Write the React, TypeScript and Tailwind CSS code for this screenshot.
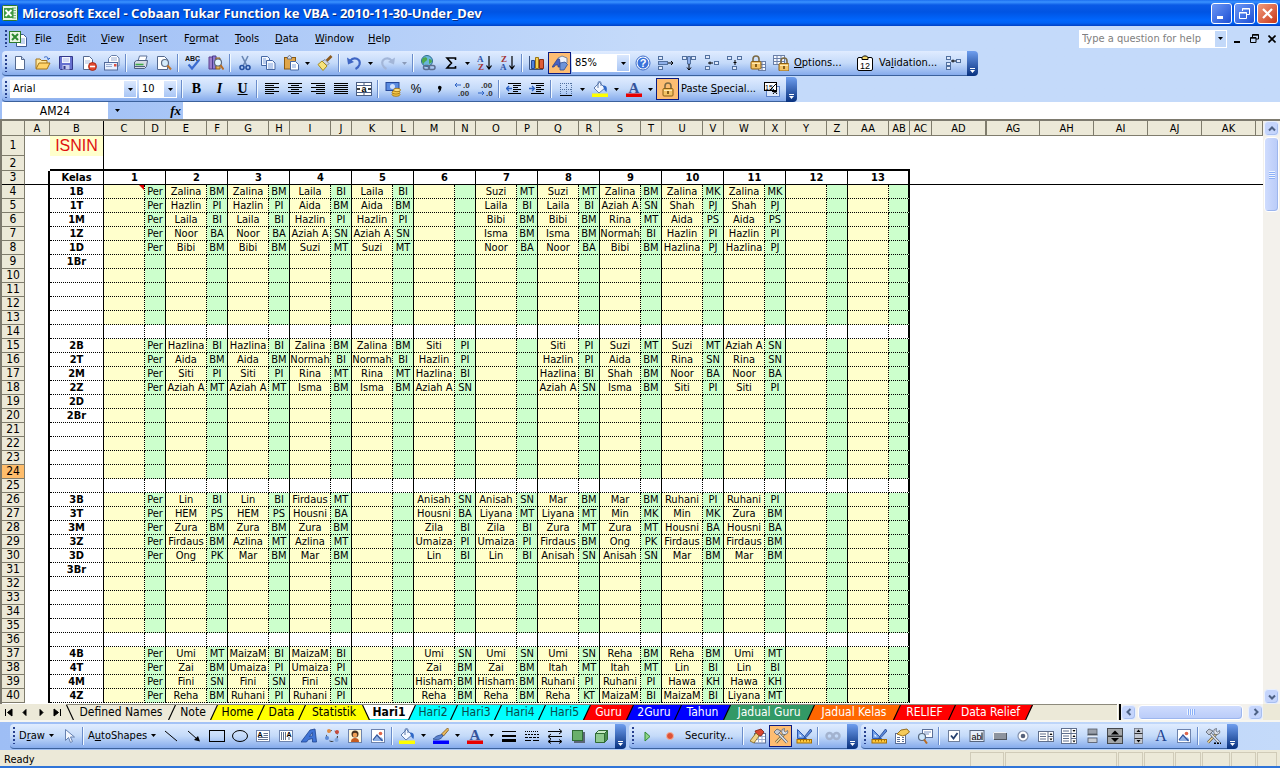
import type { ReactNode } from 'react';

const PAGE = '#f4f8ff';
const INK = '#26406e';

function Lock() {
  return (
    <g>
      <path d="M5 8V5a3 3 0 0 1 6 0v3" fill="none" stroke="#7b6a45" strokeWidth="1.6" />
      <rect x="3" y="7.5" width="10" height="7.5" rx="1" fill="#f3c365" stroke="#8a5f16" />
      <path d="M4 9.5h8" stroke="#ffe9b0" />
      <path d="M8 10v3" stroke="#6b4508" strokeWidth="1.6" />
    </g>
  );
}

function Box({ x, y }: { x: number; y: number }) {
  return <rect x={x + 0.5} y={y + 0.5} width="4" height="3" fill="#dfe9fb" stroke="#51709f" />;
}

function Underbar({ color }: { color: string }) {
  return <rect x="0" y="12.5" width="16" height="3.5" fill={color} />;
}

function Lines({ rows }: { rows: [number, number][] }) {
  return (
    <g stroke="#000" strokeWidth="1">
      {rows.map(([x1, x2], i) => (
        <path key={i} d={`M${x1} ${2.5 + i * 2}H${x2}`} />
      ))}
    </g>
  );
}

const ruler = (
  <g>
    <path d="M1.5 1.5v9h9z" fill="#6f9ee8" stroke="#2c59b3" />
    <path d="M3.5 6v2.5H6z" fill="#fff" />
    <path d="M14.5 1L9 8l-1.5 3L10 9.5 16 3z" fill="#5b8ade" stroke="#23448c" strokeWidth=".8" />
    <rect x="1" y="11.5" width="14.5" height="3.5" fill="#ffc83d" stroke="#a66f00" />
    <path d="M4.5 12v1.5M7.5 12v1.5M10.5 12v1.5M13.5 12v1.5" stroke="#a66f00" />
  </g>
);

const tools = (
  <g>
    <path d="M3 14.5L12 5" stroke="#6d5a36" strokeWidth="2.6" />
    <path d="M3 14.5L12 5" stroke="#f2dfa6" strokeWidth="1.2" />
    <path d="M14.5 2.5a3 3 0 1 1-3-2l-.5 2.5 1.5 1z" fill="#dfe4ee" stroke="#58616f" strokeWidth=".8" />
    <path d="M5 5l9 9.5" stroke="#58616f" strokeWidth="2.6" />
    <path d="M5 5l9 9.5" stroke="#e8edf5" strokeWidth="1.2" />
    <path d="M1 4l3-3 4 2-4 4z" fill="#c3cad6" stroke="#58616f" strokeWidth=".8" />
  </g>
);

const picture = (
  <g>
    <rect x="1.5" y="1.5" width="13" height="13" fill="#fff" stroke="#6d83ad" />
    <path d="M3 13v-2l4-4 3 3 1-1 2 2v2z" fill="#8fb0e3" />
    <path d="M3 12l4-5 5.5 6" fill="none" stroke="#33559b" strokeWidth="1.2" />
    <circle cx="10.5" cy="5.5" r="1.8" fill="#e0664a" />
  </g>
);

const bucket = (
  <g>
    <path d="M7.5 1.5L13 7l-6 5-5-5z" fill="#f2f7ff" stroke="#5d7aad" />
    <path d="M6 7V2a1.5 1.5 0 0 1 3 0v3" fill="none" stroke="#5d7aad" />
    <path d="M11 4.5c3.5 0 4.5 2 3.5 6.5-1.5-1-2-2-2.5-3z" fill="#2f68c8" />
  </g>
);

const icons: Record<string, ReactNode> = {
  new: (
    <g>
      <path d="M3.5 1.5h6l3 3v10h-9z" fill="#fff" stroke="#54698f" />
      <path d="M9.5 1.5v3h3" fill="#c8d9f5" stroke="#54698f" />
    </g>
  ),
  open: (
    <g>
      <path d="M1 13.5V4h4l1.5 1.5H12V8" fill="#ffe79c" stroke="#a4741a" />
      <path d="M1 14l3-6h11l-3 6z" fill="#ffd368" stroke="#a4741a" />
      <path d="M9 2.5c2-1.5 4-.5 4.5 1.5M15 3l-1.5 1.5L12 3.5" fill="none" stroke="#2c5fc0" />
    </g>
  ),
  save: (
    <g>
      <path d="M1.5 1.5h13v13h-12l-1-1z" fill="#6670cf" stroke="#33388a" />
      <rect x="4" y="2" width="8" height="6" fill="#f2f5ff" />
      <path d="M5 4h6M5 6h6" stroke="#b3bce6" />
      <rect x="4.5" y="10" width="7" height="4.5" fill="#c6cbef" />
      <rect x="5.5" y="11" width="2" height="3" fill="#33388a" />
    </g>
  ),
  permission: (
    <g>
      <path d="M2.5 1.5h6l3 3v10h-9z" fill="#fff" stroke="#54698f" />
      <path d="M4 6h5M4 8h5" stroke="#a9badb" />
      <circle cx="11.5" cy="11.5" r="4" fill="#e2492f" stroke="#9e1f0c" strokeWidth=".8" />
      <path d="M9 11.5h5" stroke="#fff" strokeWidth="1.6" />
    </g>
  ),
  mail: (
    <g>
      <path d="M4.5 7V3.5l3-3h5L15 3v8H6.5z" fill="#fff" stroke="#6880aa" />
      <rect x=".5" y="7.5" width="13" height="7.5" fill="#e9f1ff" stroke="#51699a" />
      <path d="M2 9.5h6M2 11.5h6" stroke="#9aadd2" />
      <rect x="10" y="9" width="2.5" height="2.5" fill="#de5040" />
      <path d="M7 3h6M7 5h6" stroke="#9aadd2" />
    </g>
  ),
  print: (
    <g>
      <path d="M5 6l1.5-5H14l-1.5 5z" fill="#fff" stroke="#5d7197" />
      <path d="M1.5 7l2-1.5h11l-1 6-2 2h-10z" fill="#d6dbe5" stroke="#4d5f80" />
      <path d="M2 11.5h10" stroke="#4d5f80" />
      <path d="M2.5 9.5h8" stroke="#3faa46" strokeWidth="1.6" />
    </g>
  ),
  preview: (
    <g>
      <path d="M1.5 1.5h7l3 3v10h-10z" fill="#fff" stroke="#54698f" />
      <circle cx="9" cy="8" r="3.5" fill="#d5ecfb" stroke="#5c6c86" strokeWidth="1.2" />
      <path d="M11.5 10.5l3.5 4" stroke="#c1762b" strokeWidth="2" />
    </g>
  ),
  spelling: (
    <g>
      <text x="0" y="6" fontSize="7" fontWeight="bold" fontFamily="Liberation Sans, sans-serif" fill="#111">
        ABC
      </text>
      <path d="M3.5 9.5l3.5 4 7-8.5" fill="none" stroke="#3a6bd0" strokeWidth="2.2" />
    </g>
  ),
  research: (
    <g>
      <path d="M1 2h3.5v12H1z" fill="#9d7fca" stroke="#5a3e8c" />
      <path d="M4.5 1H8v13H4.5z" fill="#8d7bd0" stroke="#4a3a8c" />
      <path d="M8 3h4v11H8z" fill="#e7b25a" stroke="#946217" />
      <circle cx="10" cy="7.5" r="3.5" fill="#e6f6ff" stroke="#58687f" strokeWidth="1.2" />
      <path d="M12.5 10l3 4.5" stroke="#b96c22" strokeWidth="2" />
    </g>
  ),
  cut: (
    <g fill="none">
      <path d="M5 1l4.5 9M11 1L6.5 10" stroke="#6a87b4" strokeWidth="1.6" />
      <circle cx="5" cy="12.5" r="2" stroke="#24509f" strokeWidth="1.6" />
      <circle cx="11" cy="12.5" r="2" stroke="#24509f" strokeWidth="1.6" />
    </g>
  ),
  copy: (
    <g fill={PAGE} stroke="#4668a5">
      <path d="M1.5 1.5h6l2 2v7h-8z" />
      <path d="M3 4h3M3 6h3M3 8h3" stroke="#7fa0dc" />
      <path d="M6.5 5.5h6L15 8v6.5H6.5z" />
      <path d="M8 9h5M8 11h5M8 13h5" stroke="#7fa0dc" />
    </g>
  ),
  paste: (
    <g>
      <rect x="1.5" y="2.5" width="11" height="11.5" fill="#e0a64a" stroke="#8a5a13" />
      <path d="M4.5 4V2l2-1.5L8.5 2v2z" fill="#dce0e8" stroke="#67728a" />
      <path d="M7.5 6.5h5l3 3V15h-8z" fill="#fff" stroke="#4668a5" />
      <path d="M9 10h4M9 12h4" stroke="#7fa0dc" />
    </g>
  ),
  painter: (
    <g>
      <path d="M14.5 1L9.5 6" stroke="#8c5a1d" strokeWidth="2.6" />
      <path d="M8 4.5l4 4-2 2-5-4z" fill="#cfd5e2" stroke="#6c7487" strokeWidth=".8" />
      <path d="M5 6L10 11l-4 4.5L1 9.5z" fill="#f6e27b" stroke="#a58a1f" />
    </g>
  ),
  undo: (
    <g>
      <path d="M4 6c4-5 11-2 9.5 3.5-.6 2-2 3.5-4 4.5" fill="none" stroke="#3f66c4" strokeWidth="2.2" />
      <path d="M1 2.5l1 7 6-2.5z" fill="#3f66c4" />
    </g>
  ),
  redo: (
    <g>
      <path d="M12 6C8 1 1 4 2.5 9.5c.6 2 2 3.5 4 4.5" fill="none" stroke="#a3b6d8" strokeWidth="2.2" />
      <path d="M15 2.5l-1 7-6-2.5z" fill="#a3b6d8" />
    </g>
  ),
  hyperlink: (
    <g>
      <circle cx="7" cy="6" r="5.5" fill="#69b6d9" stroke="#2c6c92" />
      <path d="M3 3c3-2 5 0 4 2s-3 1-3 4C2 8 1 5 3 3zM9 4c2 0 3 1 3 3l-3 2z" fill="#4da84d" />
      <rect x="3.5" y="10.5" width="6" height="4" rx="2" fill="none" stroke="#5b6e91" strokeWidth="1.5" />
      <rect x="8.5" y="10.5" width="6.5" height="4" rx="2" fill="none" stroke="#5b6e91" strokeWidth="1.5" />
    </g>
  ),
  sum: <path d="M12.5 5V3H4l4.5 5L4 13h8.5v-2" fill="none" stroke="#000" strokeWidth="1.6" />,
  sortAsc: (
    <g fontFamily="Liberation Serif, serif" fontSize="9" fontWeight="bold">
      <text x="0" y="7" fill="#2d53a5">A</text>
      <text x="1" y="15" fill="#a33030">Z</text>
      <path d="M12 1v12M9.5 10.5L12 14l2.5-3.5" fill="none" stroke="#000" strokeWidth="1.2" />
    </g>
  ),
  sortDesc: (
    <g fontFamily="Liberation Serif, serif" fontSize="9" fontWeight="bold">
      <text x="1" y="7" fill="#a33030">Z</text>
      <text x="0" y="15" fill="#2d53a5">A</text>
      <path d="M12 1v12M9.5 10.5L12 14l2.5-3.5" fill="none" stroke="#000" strokeWidth="1.2" />
    </g>
  ),
  chart: (
    <g>
      <path d="M.5 1v13.5H14" fill="none" stroke="#39527f" />
      <path d="M2.5 5.5h3v8h-3z" fill="#4f82dc" stroke="#254a93" />
      <path d="M6.5 2.5h3v11h-3z" fill="#f5cf54" stroke="#9d7412" />
      <path d="M10.5 4.5h4v9h-4z" fill="#dd5d38" stroke="#8c2b10" />
    </g>
  ),
  drawing: (
    <g>
      <path d="M6 3l4-2 5 2v5l-4 2-5-2z" fill="#eef2fa" stroke="#7c8699" />
      <path d="M0 12L5.5 4h2l1 8H6v-2H3.5L2 12z" fill="#4a62c0" stroke="#283a85" strokeWidth=".7" />
      <path d="M8 8l5-1 2.5 2.5L12 15H8z" fill="#6e94d8" stroke="#2f4f94" strokeWidth=".8" />
    </g>
  ),
  help: (
    <g>
      <circle cx="8" cy="8" r="7" fill="#fff" stroke="#3d6cc8" />
      <circle cx="8" cy="8" r="5.5" fill="#3b73db" />
      <text x="8" y="12" textAnchor="middle" fontSize="11" fontWeight="bold" fontFamily="Liberation Sans, sans-serif" fill="#fff">
        ?
      </text>
    </g>
  ),
  tracePrecedents: (
    <g>
      <Box x={0} y={1} /><Box x={0} y={11} />
      <rect x=".5" y="6.5" width="9" height="3" fill="#8fb0ea" stroke="#51709f" />
      <path d="M10 8h5M13 6l2 2-2 2" fill="none" stroke="#000" />
    </g>
  ),
  traceDown: (
    <g>
      <Box x={1} y={1} /><Box x={10} y={1} />
      <path d="M6.5 1.5h3V9h-3z" fill="#8fb0ea" stroke="#51709f" />
      <path d="M8 9v6M6 12.5L8 15l2-2.5" fill="none" stroke="#000" />
    </g>
  ),
  traceDependents: (
    <g>
      <Box x={1} y={0} /><Box x={1} y={11} /><Box x={10} y={6} />
      <path d="M4 8h5M6 6.5v3" stroke="#000" />
    </g>
  ),
  traceUp: (
    <g>
      <Box x={0} y={1} /><Box x={10} y={1} /><Box x={5} y={11} />
      <path d="M8 5v5M6.5 7.5h3" stroke="#000" />
    </g>
  ),
  lockSheet: (
    <g>
      <rect x="8.5" y="6.5" width="7" height="9" fill={PAGE} stroke="#6a7fa8" />
      <path d="M9 9.5h6M9 12.5h6M12 7v8" stroke="#6a7fa8" />
      <g transform="translate(-2 -1)"><Lock /></g>
    </g>
  ),
  lockBook: (
    <g>
      <rect x=".5" y=".5" width="11" height="9" fill={PAGE} stroke="#6a7fa8" />
      <path d="M1 3.5h10M1 6.5h10M4 1v8M8 1v8" stroke="#6a7fa8" />
      <g transform="translate(3 1)"><Lock /></g>
    </g>
  ),
  lock: <Lock />,
  calendar: (
    <g>
      <rect x=".5" y="2.5" width="15" height="13" rx="1.5" fill="#fff" stroke="#000" />
      <path d="M5 4.5v-2L6.5 1h3L11 2.5v2z" fill="#f3d76b" stroke="#000" />
      <text x="8" y="14" textAnchor="middle" fontSize="9" fontFamily="Liberation Sans, sans-serif">
        12
      </text>
    </g>
  ),
  group: (
    <g>
      <Box x={1} y={1} /><Box x={1} y={7} /><Box x={1} y={11} /><Box x={11} y={4} />
      <path d="M6 6h5M8 4.5v3" stroke="#000" />
    </g>
  ),
  alignLeft: <Lines rows={[[1, 15], [1, 10], [1, 15], [1, 10], [1, 15], [1, 10]]} />,
  alignCenter: <Lines rows={[[1, 15], [4, 12], [1, 15], [4, 12], [1, 15], [4, 12]]} />,
  alignRight: <Lines rows={[[1, 15], [6, 15], [1, 15], [6, 15], [1, 15], [6, 15]]} />,
  justify: <Lines rows={[[1, 15], [1, 15], [1, 15], [1, 15], [1, 15], [1, 15]]} />,
  merge: (
    <g>
      <rect x=".5" y="1.5" width="15" height="13" fill="#fff" stroke="#4a5e83" />
      <path d="M1 4.5h15M1 11.5h15M8 2v2M8 12v2" stroke="#4a5e83" />
      <text x="8" y="10.5" textAnchor="middle" fontSize="9" fontWeight="bold" fontFamily="Liberation Sans, sans-serif">
        a
      </text>
      <path d="M1 8h3M12 8h3" stroke="#000" strokeWidth="1.4" />
    </g>
  ),
  currency: (
    <g>
      <rect x="1" y="1.5" width="13" height="8" fill="#5a8be0" stroke="#24489a" />
      <circle cx="7.5" cy="5.5" r="2.5" fill="#cfe0ff" />
      <ellipse cx="11" cy="13.5" rx="4" ry="1.8" fill="#f7ca4b" stroke="#9a6a05" strokeWidth=".8" />
      <ellipse cx="11" cy="11.3" rx="4" ry="1.8" fill="#f7ca4b" stroke="#9a6a05" strokeWidth=".8" />
      <ellipse cx="12" cy="9" rx="3.5" ry="1.7" fill="#ffe183" stroke="#9a6a05" strokeWidth=".8" />
    </g>
  ),
  percent: (
    <text x="8" y="12" textAnchor="middle" fontSize="12" fontFamily="Liberation Sans, sans-serif">
      %
    </text>
  ),
  comma: <path d="M7 6.5a1.8 1.8 0 1 1 3.200 1.200C10 10 8.500 11 7 11.500v-.6c1-.6 1.500-1.200 1.400-2.200C7.500 8.600 7 7.500 7 6.500z" />,
  moreDecimals: (
    <g fontFamily="Liberation Sans, sans-serif" fontSize="8" fontWeight="bold" fill="#333">
      <path d="M7 4H1M3 2L1 4l2 2" fill="none" stroke="#2d62c4" />
      <text x="9" y="7">.0</text>
      <text x="4" y="15">.00</text>
    </g>
  ),
  lessDecimals: (
    <g fontFamily="Liberation Sans, sans-serif" fontSize="8" fontWeight="bold" fill="#333">
      <text x="4" y="7">.00</text>
      <path d="M1 12h6M5 10l2 2-2 2" fill="none" stroke="#2d62c4" />
      <text x="9" y="15">.0</text>
    </g>
  ),
  outdent: (
    <g>
      <Lines rows={[[2, 15], [7, 15], [7, 12], [7, 15], [7, 12], [2, 15]]} />
      <path d="M6 7.5H.5M3 5L.5 7.5 3 10" fill="none" stroke="#2d62c4" strokeWidth="1.3" />
    </g>
  ),
  indent: (
    <g>
      <Lines rows={[[2, 15], [7, 15], [7, 12], [7, 15], [7, 12], [2, 15]]} />
      <path d="M0 7.5h5.5M3 5l2.5 2.5L3 10" fill="none" stroke="#2d62c4" strokeWidth="1.3" />
    </g>
  ),
  borders: (
    <g stroke="#51709f" strokeDasharray="1 1">
      <path d="M2 2.5h12M2 8.5h12M2.5 2v12M8.5 2v12M13.5 2v12" />
      <path d="M2 14.5h12" stroke="#000" strokeDasharray="none" />
    </g>
  ),
  fill: <g>{bucket}<Underbar color="#ffff00" /></g>,
  fontColor: (
    <g>
      <text x="8" y="12" textAnchor="middle" fontSize="15" fontWeight="bold" fontFamily="Liberation Serif, serif" fill="#35549b">
        A
      </text>
      <Underbar color="#e80000" />
    </g>
  ),
  lineColor: (
    <g>
      <path d="M14.5 0L16 1.5 10.5 8 8.5 6z" fill="#e9b85c" stroke="#7d5613" strokeWidth=".8" />
      <path d="M9 6.5L4 8c-1.5.5-2.5 2.5-4 3 4 1.5 8 .5 10-3z" fill="#5d84cf" stroke="#274a91" strokeWidth=".8" />
      <Underbar color="#0000ff" />
    </g>
  ),
  calc: (
    <g>
      <rect x="2.5" y="5.5" width="13" height="10" fill="#dbe7fb" stroke="#5b81c9" />
      <rect x=".5" y="1.5" width="12" height="8" fill="#fff" stroke="#000" />
      <text x="5" y="8.5" textAnchor="middle" fontSize="7" fontFamily="Liberation Sans, sans-serif">
        15
      </text>
      <path d="M13 2L5 10M8 10.5h5M9 13l4-5M9 8l4 5" stroke="#000" fill="none" />
    </g>
  ),
  pointer: <path d="M4.5 1.5v11l3-3 2 5 2-1-2-4.5h4z" fill="#f2f6fd" stroke="#6681b0" />,
  line: <path d="M2 3l12 10" stroke="#000" />,
  arrow: <g><path d="M2 3l9 8" stroke="#000" /><path d="M14 13.5L8 12l4-4z" /></g>,
  rectangle: <rect x=".5" y="2.5" width="15" height="11" fill="none" stroke="#000" />,
  oval: <ellipse cx="8" cy="8" rx="7.5" ry="5.5" fill="none" stroke="#000" />,
  textBox: (
    <g>
      <rect x="1.5" y="2.5" width="13" height="11" fill="#fff" stroke="#6d83ad" />
      <text x="2.5" y="8.5" fontSize="7" fontWeight="bold" fontFamily="Liberation Sans, sans-serif">A</text>
      <path d="M8.5 5.5H13M8.5 7.5H13M3 9.5h10M3 11.5h10" stroke="#5f6f8d" />
    </g>
  ),
  verticalText: (
    <g>
      <rect x="1.5" y="2.5" width="13" height="11" fill="#fff" stroke="#6d83ad" />
      <path d="M3.5 4v8M5.5 4v8M7.5 4v8M11 9v3" stroke="#5f6f8d" />
      <text x="8.5" y="8.5" fontSize="7" fontWeight="bold" fontFamily="Liberation Sans, sans-serif">A</text>
    </g>
  ),
  wordArt: <path d="M0 14L9 2l5-1 1.5 13h-4v-3.5l-4 1-2 2.5zM8.5 8.5l3-.8-.2-3.2z" fill="#3f74d6" stroke="#1d438f" strokeWidth=".8" />,
  diagram: (
    <g>
      <circle cx="8" cy="8" r="5.5" fill="none" stroke="#333" strokeDasharray="4 3" />
      <circle cx="5" cy="3" r="2" fill="#e08b42" />
      <circle cx="13" cy="4" r="2" fill="#c64b3b" />
      <circle cx="3" cy="10" r="2" fill="#5b8ad6" />
      <circle cx="12.5" cy="12" r="2" fill="#7ea6e2" />
    </g>
  ),
  clipArt: (
    <g>
      <rect x="1.5" y="1.5" width="13" height="13" fill="#fff6d8" stroke="#6d83ad" />
      <circle cx="8" cy="6" r="3.5" fill="#47321f" />
      <circle cx="8" cy="7" r="2.3" fill="#f1a055" />
      <path d="M4 14c0-3 1.5-4 4-4s4 1 4 4z" fill="#c45a20" />
    </g>
  ),
  picture,
  lineStyle: (
    <g>
      <rect x="1" y="3" width="14" height="1" />
      <rect x="1" y="7" width="14" height="2" />
      <rect x="1" y="11" width="14" height="3" />
    </g>
  ),
  dashStyle: (
    <g stroke="#000">
      <path d="M1 3.5h14" strokeDasharray="1 1" /><path d="M1 6.5h14" strokeDasharray="2 1" />
      <path d="M1 9.5h14" strokeDasharray="3 1" /><path d="M1 12.5h14" strokeDasharray="6 2" />
    </g>
  ),
  arrowStyle: (
    <g stroke="#000" fill="none">
      <path d="M1 3.5h13M12 1l3 2.5L12 6M2 8.5h13M4 6L1 8.5 4 11M2 13.5h12M4 11.5l-3 2 3 2M12 11.5l3 2-3 2" />
    </g>
  ),
  shadow: (
    <g>
      <rect x="4" y="4" width="11" height="11" fill="#5a6577" />
      <rect x="2.5" y="2.5" width="10" height="10" fill="#69b06b" stroke="#2f6b35" />
    </g>
  ),
  threeD: (
    <g stroke="#2f6b35">
      <path d="M2.5 5.5h9v9h-9z" fill="#8fca8f" />
      <path d="M2.5 5.5l3-3h9l-3 3z" fill="#c9ecc6" />
      <path d="M11.5 5.5l3-3v9l-3 3z" fill="#4b8f52" />
    </g>
  ),
  play: <path d="M6 4l5 4.5L6 13z" fill="#8ed487" stroke="#2f8a34" />,
  record: <circle cx="8" cy="8" r="3.5" fill="#dd5237" stroke="#f4b3a0" />,
  visualBasic: (
    <g>
      <rect x="4.5" y="5.5" width="11" height="9.5" fill="#fff" stroke="#5b6f98" />
      <path d="M5 8.5h10M5 11.5h10M8.5 6v9M12 6v9" stroke="#9fb0d3" />
      <path d="M5 3l6-2 3 3-3 4-4-1z" fill="#d9452f" stroke="#7e1a0c" strokeWidth=".8" />
      <path d="M0 13l6-8 3 3-5 7z" fill="#efd48b" stroke="#80621a" strokeWidth=".8" />
    </g>
  ),
  tools,
  ruler,
  infinity: (
    <g fill="none" stroke="#a3b3cf" strokeWidth="2.4">
      <circle cx="4.5" cy="8" r="3" /><circle cx="11.5" cy="8" r="3" />
    </g>
  ),
  properties: (
    <g>
      <rect x="1.5" y="5.5" width="10" height="10" fill="#fff" stroke="#5b6f98" />
      <path d="M3 9.5h3M3 11.5h3M3 13.5h3M8 9.5h2M8 11.5h2M8 13.5h2" stroke="#5b6f98" />
      <path d="M3 6l4-4 6-1 2.5 3-4 3-3 1z" fill="#f4ca5a" stroke="#8f6310" strokeWidth=".9" />
    </g>
  ),
  viewCode: (
    <g>
      <rect x="5.5" y="1.5" width="10" height="8" fill="#fff" stroke="#5b6f98" />
      <path d="M7 4h7M7 6h5" stroke="#7b93c4" />
      <circle cx="5" cy="9" r="3.5" fill="#cfe6fb" stroke="#57687f" strokeWidth="1.2" />
      <path d="M7 11.5l3 4" stroke="#b96c22" strokeWidth="2" />
    </g>
  ),
  checkBox: (
    <g>
      <rect x="2.5" y="2.5" width="11" height="11" fill="#fff" stroke="#6f7f9b" />
      <path d="M5 7.5l2.5 3 4-5.5" fill="none" stroke={INK} strokeWidth="1.8" />
    </g>
  ),
  editBox: (
    <g>
      <rect x="1" y="2.5" width="14" height="11" fill="#e7eefa" stroke="#55647e" />
      <text x="2.5" y="11.5" fontSize="9" fontFamily="Liberation Sans, sans-serif">ab</text>
      <path d="M13 4.5V12" stroke="#000" />
    </g>
  ),
  command: (
    <g>
      <rect x="2" y="5" width="13" height="7" fill="#4f555f" />
      <rect x="1" y="4" width="13" height="7" fill="#8d939e" />
      <path d="M1.5 11V4.5H14" fill="none" stroke="#eef1f6" />
    </g>
  ),
  option: (
    <g>
      <circle cx="8" cy="8" r="5" fill="#fff" stroke="#8391ad" strokeWidth="1.2" />
      <circle cx="8" cy="8" r="2.3" fill="#56617a" />
    </g>
  ),
  listBox: (
    <g>
      <rect x=".5" y="3.5" width="15" height="10" fill="#fff" stroke="#5f6f8d" />
      <path d="M2 6h6M2 8.5h6M2 11h6M10 3.5v10M10 8.5h5" stroke="#5f6f8d" />
      <path d="M11.5 7L13 5l1.5 2zM11.5 10.5l1.5 2 1.5-2z" />
    </g>
  ),
  comboBox: (
    <g>
      <rect x=".5" y=".5" width="15" height="15" fill="#fff" stroke="#5f6f8d" />
      <path d="M1 5.5h15M2 3h6M2 8h6M2 10.5h6M2 13h6M10 .5v15M10 10.5h5" stroke="#5f6f8d" />
      <path d="M11.5 2L13 4l1.5-2zM11.5 9L13 7l1.5 2zM11.5 12.5l1.5 2 1.5-2z" />
    </g>
  ),
  toggle: (
    <g>
      <rect x="4" y="1" width="9" height="5" fill="#9aa0ab" stroke="#555c68" strokeWidth=".8" />
      <path d="M3.5 7h10" stroke="#000" />
      <path d="M3.5 8h10" stroke="#fff" />
      <rect x="4" y="10" width="9" height="4.5" fill="#c9cdd5" stroke="#4c5361" strokeWidth=".8" />
    </g>
  ),
  spin: (
    <g>
      <rect x=".5" y=".5" width="15" height="15" fill="#a3a6a8" stroke="#44484e" />
      <path d="M4 6.5l4-4 4 4zM4 10l4 4 4-4z" />
      <path d="M1 8.2h14" stroke="#000" />
    </g>
  ),
  scroll: (
    <g>
      <rect x="4.5" y=".5" width="8" height="15" fill="#c3c8d1" stroke="#6b7382" strokeWidth=".8" />
      <path d="M4.5 5.5h8M4.5 10.5h8" stroke="#333" />
      <path d="M6.5 4l2-2.5 2 2.5zM6.5 12l2 2.5 2-2.5z" />
    </g>
  ),
  label: (
    <text x="8" y="13" textAnchor="middle" fontSize="16" fontFamily="Liberation Serif, serif" fill="#1d418f">
      A
    </text>
  ),
  moreControls: <g>{tools}<path d="M9 15.5h7" stroke="#000" strokeWidth="2" strokeDasharray="2 1" /></g>,
};

function Icon({ name }: { name: string }) {
  return (
    <svg viewBox="0 0 16 16" className="w-4 h-4 shrink-0" aria-hidden="true">
      {icons[name]}
    </svg>
  );
}

function Tool({ name, active }: { name: string; active?: boolean }) {
  return (
    <button
      aria-label={name}
      className={`w-[23px] h-[22px] shrink-0 flex items-center justify-center ${active ? 'bg-[#fdbd72] border border-[#0a1a80]' : ''}`}
    >
      <Icon name={name} />
    </button>
  );
}

function Glyph({ label, className }: { label: string; className: string }) {
  return (
    <button className={`w-[23px] shrink-0 text-center text-[14px] leading-[22px] font-bold font-['Liberation_Serif',serif] ${className}`}>
      {label}
    </button>
  );
}

function Caret({ dim }: { dim?: boolean }) {
  return (
    <svg viewBox="0 0 5 3" className={`w-[5px] h-[3px] shrink-0 ${dim ? 'fill-[#8a9ab8]' : 'fill-black'}`} aria-hidden="true">
      <path d="M0 0h5L2.5 3z" />
    </svg>
  );
}

function DropArrow({ dim }: { dim?: boolean }) {
  return (
    <button aria-label="More choices" className="w-[11px] h-[22px] shrink-0 flex items-center justify-center">
      <Caret dim={dim} />
    </button>
  );
}

function Sep() {
  return (
    <div className="w-1.5 h-[18px] shrink-0 flex justify-center">
      <div className="w-px bg-[#6a8ccb]" />
      <div className="w-px bg-[#f1f9ff]" />
    </div>
  );
}

function Grip() {
  return <div className="w-[2px] h-[17px] ml-[3px] mr-px shrink-0 bg-[repeating-linear-gradient(#27418f_0_2px,transparent_2px_4px)]" />;
}

function Toolbar({ label, children }: { label: string; children: ReactNode }) {
  return (
    <div role="toolbar" aria-label={label} className="h-[25px] flex shrink-0">
      <div className="flex items-center pr-[3px] rounded-l-sm border-b border-[#3b619c] bg-linear-to-b from-[#e0ecff] via-[#c4daf9] to-[#86abec]">
        <Grip />
        {children}
      </div>
      <button
        aria-label="Toolbar options"
        className="w-[11px] shrink-0 rounded-r-sm bg-linear-to-b from-[#6f9eee] to-[#07317f] flex flex-col items-center justify-end gap-px pb-[3px]"
      >
        <span className="w-[5px] h-px bg-white" />
        <svg viewBox="0 0 5 3" className="w-[5px] h-[3px] fill-white" aria-hidden="true">
          <path d="M0 0h5L2.5 3z" />
        </svg>
      </button>
    </div>
  );
}

function Combo({ label, value, className }: { label: string; value: string; className: string }) {
  return (
    <div className={`h-[18px] shrink-0 flex items-center bg-white ${className}`}>
      <select aria-label={label} className="flex-1 min-w-0 appearance-none pl-[3px] bg-transparent leading-4 outline-none">
        <option>{value}</option>
      </select>
      <span className="w-3 h-4 mr-px flex items-center justify-center pointer-events-none bg-linear-to-b from-[#dbe8fd] to-[#a9c6f5]">
        <Caret />
      </span>
    </div>
  );
}

function Hot({ before = '', hot, after, className = '' }: { before?: string; hot: string; after: string; className?: string }) {
  return (
    <button className={`shrink-0 whitespace-nowrap text-left ${className}`}>
      {before}
      <u>{hot}</u>
      {after}
    </button>
  );
}

function ExcelLogo({ className }: { className: string }) {
  return (
    <svg viewBox="0 0 16 16" className={className} aria-hidden="true">
      <rect x=".5" y=".5" width="15" height="15" rx="1" fill="#e9f5e4" stroke="#2d7a2d" />
      <path d="M10 3h4M10 5.5h4M10 8h4M10 10.5h4M10 13h4" stroke="#79b479" />
      <rect x="2" y="3" width="9.5" height="10" fill="#3f9a43" />
      <path d="M3.5 5l6 6M9.5 5l-6 6" stroke="#fff" strokeWidth="1.8" />
    </svg>
  );
}

function TitleBar() {
  const box = 'w-[21px] h-[21px] rounded-[3px] border border-white flex items-center justify-center';
  return (
    <header className="h-[26px] shrink-0 flex items-center gap-1 px-[2px] text-white bg-[linear-gradient(#1c6ff0_0,#3a92ff_2px,#0a5ae6_5px,#0054e3_12px,#0066fd_20px,#0062f4_23px,#0040c4_26px)]">
      <ExcelLogo className="w-4 h-4" />
      <h1 className="flex-1 min-w-0 whitespace-nowrap text-[13px] leading-6 font-bold font-['Noto_Sans',sans-serif] [text-shadow:1px_1px_0_#0a2a7a]">
        Microsoft Excel - Cobaan Tukar Function ke VBA - 2010-11-30-Under_Dev
      </h1>
      <div className="flex gap-[2px]">
        <button aria-label="Minimize" className={`${box} bg-linear-to-br from-[#6d97f5] to-[#1d4ed4]`}>
          <svg viewBox="0 0 13 13" className="w-[13px] h-[13px]"><path d="M2 10.5h6" stroke="#fff" strokeWidth="3" /></svg>
        </button>
        <button aria-label="Restore" className={`${box} bg-linear-to-br from-[#6d97f5] to-[#1d4ed4]`}>
          <svg viewBox="0 0 13 13" className="w-[13px] h-[13px] fill-none stroke-white">
            <path d="M4.5 4V1.5h7v6H9M4 2h8M1.5 5.5h7v6h-7zM1 6h8" />
          </svg>
        </button>
        <button aria-label="Close" className={`${box} bg-linear-to-br from-[#f09a7c] to-[#c8320f]`}>
          <svg viewBox="0 0 13 13" className="w-[13px] h-[13px]"><path d="M2 2l9 9M11 2l-9 9" stroke="#fff" strokeWidth="2.2" /></svg>
        </button>
      </div>
    </header>
  );
}

const MENUS = [
  ['', 'F', 'ile', 'w-8'],
  ['', 'E', 'dit', 'w-[34px]'],
  ['', 'V', 'iew', 'w-[38px]'],
  ['', 'I', 'nsert', 'w-[45px]'],
  ['F', 'o', 'rmat', 'w-[51px]'],
  ['', 'T', 'ools', 'w-10'],
  ['', 'D', 'ata', 'w-10'],
  ['', 'W', 'indow', 'w-[53px]'],
  ['', 'H', 'elp', 'w-10'],
];

function MenuBar() {
  return (
    <div className="h-[25px] shrink-0 flex items-center pl-[2px]">
      <Grip />
      <div className="w-[27px] shrink-0 pl-px">
        <svg viewBox="0 0 18 16" className="w-[18px] h-4" aria-hidden="true">
          <path d="M7.5 3.5h7l3 3v9h-10z" fill="#fff" stroke="#3c5a94" />
          <path d="M11 8h5M11 10h5M11 12h5" stroke="#8aa7dc" />
          <rect x=".5" y=".5" width="11" height="11" fill="#e9f5e4" stroke="#2d7a2d" />
          <path d="M3 3l6 6M9 3L3 9" stroke="#2d8a32" strokeWidth="2" />
        </svg>
      </div>
      <nav className="flex flex-1">
        {MENUS.map(([before, hot, after, width]) => (
          <Hot key={hot + after} before={before} hot={hot} after={after} className={width} />
        ))}
      </nav>
      <div className="w-[148px] h-[18px] flex items-center bg-white">
        <input aria-label="Type a question for help" placeholder="Type a question for help" className="flex-1 min-w-0 pl-[3px] outline-none placeholder:text-[#808080]" />
        <span className="w-[11px] h-4 mr-px flex items-center justify-center bg-[#c3d9f9]"><Caret /></span>
      </div>
      <div className="flex items-center gap-[9px] pl-1.5 pr-1">
        <button aria-label="Minimize workbook">
          <svg viewBox="0 0 8 8" className="w-2 h-2"><path d="M1 7h6" stroke="#000" strokeWidth="2" /></svg>
        </button>
        <button aria-label="Restore workbook">
          <svg viewBox="0 0 9 9" className="w-[9px] h-[9px] fill-none stroke-black">
            <path d="M2.5 3V.5h6V5H6M2 1.2h7M.5 3.5H6v5H.5zM0 4.2h6" />
          </svg>
        </button>
        <button aria-label="Close workbook">
          <svg viewBox="0 0 8 8" className="w-2 h-2"><path d="M.5.5l7 7M7.5.5l-7 7" stroke="#000" strokeWidth="1.6" /></svg>
        </button>
      </div>
    </div>
  );
}

function StandardBar() {
  return (
    <Toolbar label="Standard">
      <Tool name="new" /><Tool name="open" /><Tool name="save" /><Tool name="permission" /><Tool name="mail" />
      <Sep />
      <Tool name="print" /><Tool name="preview" />
      <Sep />
      <Tool name="spelling" /><Tool name="research" />
      <Sep />
      <Tool name="cut" /><Tool name="copy" /><Tool name="paste" /><DropArrow /><Tool name="painter" />
      <Sep />
      <Tool name="undo" /><DropArrow /><Tool name="redo" /><DropArrow dim />
      <Sep />
      <Tool name="hyperlink" /><Tool name="sum" /><DropArrow /><Tool name="sortAsc" /><Tool name="sortDesc" />
      <Sep />
      <Tool name="chart" /><Tool name="drawing" active />
      <Combo label="Zoom" value="85%" className="w-[58px] mx-px" />
      <Tool name="help" /><Tool name="tracePrecedents" /><Tool name="traceDown" /><Tool name="traceDependents" />
      <Tool name="traceUp" /><Tool name="lockSheet" /><Tool name="lockBook" />
      <Hot hot="O" after="ptions..." className="w-[61px] pl-[2px]" />
      <Tool name="calendar" />
      <Hot before="Va" hot="l" after="idation..." className="w-[65px] pl-[3px]" />
      <Tool name="group" />
    </Toolbar>
  );
}

function FormatBar() {
  return (
    <Toolbar label="Formatting">
      <Combo label="Font" value="Arial" className="w-[127px] ml-[2px]" />
      <Combo label="Font size" value="10" className="w-[38px] mx-[2px]" />
      <Sep />
      <Glyph label="B" className="" /><Glyph label="I" className="italic" /><Glyph label="U" className="underline" />
      <Sep />
      <Tool name="alignLeft" /><Tool name="alignCenter" /><Tool name="alignRight" /><Tool name="justify" /><Tool name="merge" />
      <Sep />
      <Tool name="currency" /><Tool name="percent" /><Tool name="comma" /><Tool name="moreDecimals" /><Tool name="lessDecimals" />
      <Sep />
      <Tool name="outdent" /><Tool name="indent" />
      <Sep />
      <Tool name="borders" /><DropArrow /><Tool name="fill" /><DropArrow /><Tool name="fontColor" /><DropArrow />
      <Tool name="lock" active />
      <Hot before="Paste " hot="S" after="pecial..." className="w-[81px] pl-[2px]" />
      <Tool name="calc" />
    </Toolbar>
  );
}

function FormulaBar() {
  return (
    <div className="h-[17px] shrink-0 flex pl-[2px]">
      <input aria-label="Name Box" defaultValue="AM24" className="w-[106px] bg-white text-center text-[12px] outline-none" />
      <button aria-label="Names" className="w-[19px] flex items-center justify-center"><Caret /></button>
      <button aria-label="Insert function" className="w-14 pr-[2px] text-right text-[13px] leading-4 font-bold italic font-['Liberation_Serif',serif]">
        fx
      </button>
      <input aria-label="Formula" className="flex-1 min-w-0 bg-white outline-none" />
    </div>
  );
}

// one string per class: periods 2 to 11, teacher and subject split by a slash
const LESSONS: Record<string, string> = {
  '1B': 'Zalina/BM|Zalina/BM|Laila/BI|Laila/BI||Suzi/MT|Suzi/MT|Zalina/BM|Zalina/MK|Zalina/MK',
  '1T': 'Hazlin/PI|Hazlin/PI|Aida/BM|Aida/BM||Laila/BI|Laila/BI|Aziah A/SN|Shah/PJ|Shah/PJ',
  '1M': 'Laila/BI|Laila/BI|Hazlin/PI|Hazlin/PI||Bibi/BM|Bibi/BM|Rina/MT|Aida/PS|Aida/PS',
  '1Z': 'Noor/BA|Noor/BA|Aziah A/SN|Aziah A/SN||Isma/BM|Isma/BM|Normah/BI|Hazlin/PI|Hazlin/PI',
  '1D': 'Bibi/BM|Bibi/BM|Suzi/MT|Suzi/MT||Noor/BA|Noor/BA|Bibi/BM|Hazlina/PJ|Hazlina/PJ',
  '2B': 'Hazlina/BI|Hazlina/BI|Zalina/BM|Zalina/BM|Siti/PI||Siti/PI|Suzi/MT|Suzi/MT|Aziah A/SN',
  '2T': 'Aida/BM|Aida/BM|Normah/BI|Normah/BI|Hazlin/PI||Hazlin/PI|Aida/BM|Rina/SN|Rina/SN',
  '2M': 'Siti/PI|Siti/PI|Rina/MT|Rina/MT|Hazlina/BI||Hazlina/BI|Shah/BM|Noor/BA|Noor/BA',
  '2Z': 'Aziah A/MT|Aziah A/MT|Isma/BM|Isma/BM|Aziah A/SN||Aziah A/SN|Isma/BM|Siti/PI|Siti/PI',
  '3B': 'Lin/BI|Lin/BI|Firdaus/MT||Anisah/SN|Anisah/SN|Mar/BM|Mar/BM|Ruhani/PI|Ruhani/PI',
  '3T': 'HEM/PS|HEM/PS|Housni/BA||Housni/BA|Liyana/MT|Liyana/MT|Min/MK|Min/MK|Zura/BM',
  '3M': 'Zura/BM|Zura/BM|Zura/BM||Zila/BI|Zila/BI|Zura/MT|Zura/MT|Housni/BA|Housni/BA',
  '3Z': 'Firdaus/BM|Azlina/MT|Azlina/MT||Umaiza/PI|Umaiza/PI|Firdaus/BM|Ong/PK|Firdaus/BM|Firdaus/BM',
  '3D': 'Ong/PK|Mar/BM|Mar/BM||Lin/BI|Lin/BI|Anisah/SN|Anisah/SN|Mar/BM|Mar/BM',
  '4B': 'Umi/MT|MaizaM/BI|MaizaM/BI||Umi/SN|Umi/SN|Umi/SN|Reha/BM|Reha/BM|Umi/MT',
  '4T': 'Zai/BM|Umaiza/PI|Umaiza/PI||Zai/BM|Zai/BM|Itah/MT|Itah/MT|Lin/BI|Lin/BI',
  '4M': 'Fini/SN|Fini/SN|Fini/SN||Hisham/BM|Hisham/BM|Ruhani/PI|Ruhani/PI|Hawa/KH|Hawa/KH',
  '4Z': 'Reha/BM|Ruhani/PI|Ruhani/PI||Reha/BM|Reha/BM|Reha/KT|MaizaM/BI|MaizaM/BI|Liyana/MT',
};

const ROW_LABELS: Record<number, string> = {
  4: '1B', 5: '1T', 6: '1M', 7: '1Z', 8: '1D', 9: '1Br',
  15: '2B', 16: '2T', 17: '2M', 18: '2Z', 19: '2D', 20: '2Br',
  26: '3B', 27: '3T', 28: '3M', 29: '3Z', 30: '3D', 31: '3Br',
  37: '4B', 38: '4T', 39: '4M', 40: '4Z',
};

const GAP_ROWS = [14, 25, 36];
const PERIODS = Array.from({ length: 13 }, (_, i) => i + 1);
const PAIR_COLUMNS = 'C D E F G H I J K L M N O P Q R S T U V W X Y Z AA AB'.split(' ');
const TAIL_COLUMNS = ['AC', 'AD', 'AG', 'AH', 'AI', 'AJ', 'AK', ''];
const HEAD = 'p-0 bg-[#ece9d8] border-r border-b border-[#7f7c6c] font-normal';

function RowHead({ n }: { n: number }) {
  const edge = n === 3 ? 'border-b-black' : '';
  const selected = n === 24 ? 'bg-[#ffbd6b] border-[#1a1a80]' : '';
  return <th scope="row" className={`${HEAD} text-[12px] leading-[13px] ${edge} ${selected}`}>{n}</th>;
}

function ClassRow({ n }: { n: number }) {
  const label = ROW_LABELS[n] ?? '';
  const lessons = LESSONS[label] ? ['/Per', ...LESSONS[label].split('|')] : [];
  const gap = GAP_ROWS.includes(n);
  return (
    <tr className="h-[14px]">
      <RowHead n={n} />
      <td className="p-0 border-r-2 border-black" />
      <td className="p-0 border-r border-b border-black [border-bottom-style:dotted] font-bold">{label}</td>
      {PERIODS.map((period) => {
        const [teacher = '', subject = ''] = (lessons[period - 1] ?? '').split('/');
        const last = period === 13;
        return [
          <td
            key={`t${period}`}
            className={`relative p-0 border-r border-b border-dotted border-black whitespace-nowrap overflow-hidden ${gap ? '' : 'bg-[#ffffcc]'}`}
          >
            {teacher}
            {n === 4 && period === 1 && (
              <span className="absolute right-0 top-0 w-[5px] h-[5px] bg-[#e00000] [clip-path:polygon(0_0,100%_0,100%_100%)]" />
            )}
          </td>,
          <td
            key={`s${period}`}
            className={`p-0 border-b border-black [border-bottom-style:dotted] whitespace-nowrap ${last ? 'border-r-2' : 'border-r'} ${gap ? '' : 'bg-[#ccffcc]'}`}
          >
            {subject}
          </td>,
        ];
      })}
      <td colSpan={8} />
    </tr>
  );
}

function Sheet() {
  const rows = Array.from({ length: 37 }, (_, i) => i + 4);
  return (
    <div className="flex-1 min-w-0 overflow-hidden">
      <table className="w-full table-fixed border-separate border-spacing-0 text-center text-[11px] leading-[13px]">
        <colgroup>
          <col className="w-[23px]" />
          <col className="w-[25px]" />
          <col className="w-[54px]" />
          {PERIODS.map((p) => [<col key={`a${p}`} className="w-[41px]" />, <col key={`b${p}`} className="w-[21px]" />])}
          <col className="w-[22px]" />
          <col className="w-[55px]" />
          <col className="w-[53px]" />
          <col className="w-[54px]" />
          <col className="w-[54px]" />
          <col className="w-[54px]" />
          <col className="w-[54px]" />
          <col />
        </colgroup>
        <thead>
          <tr className="h-[15px]">
            <th className={HEAD} />
            <th className={HEAD}>A</th>
            <th className={`${HEAD} border-r-black`}>B</th>
            {PAIR_COLUMNS.map((c) => <th key={c} scope="col" className={HEAD}>{c}</th>)}
            {TAIL_COLUMNS.map((c) => (
              <th key={c} className={`${HEAD} ${c === 'AD' ? 'border-r-2' : ''}`}>{c}</th>
            ))}
          </tr>
        </thead>
        <tbody>
          <tr className="h-5">
            <RowHead n={1} />
            <td className="p-0" />
            <td className="p-0 bg-[#ffffcc] border-r border-black text-[16px] leading-5 text-[#e01010] font-['Liberation_Sans',Arial,sans-serif]">ISNIN</td>
            <td colSpan={34} />
          </tr>
          <tr className="h-[15px]">
            <RowHead n={2} />
            <td className="p-0" />
            <td className="p-0 border-r border-b-2 border-black" />
            <td colSpan={26} className="p-0 border-b-2 border-black" />
            <td colSpan={8} />
          </tr>
          <tr className="h-[14px] font-bold">
            <RowHead n={3} />
            <td className="p-0 border-r-2 border-b border-black" />
            <td className="p-0 border-r border-b border-black">Kelas</td>
            {PERIODS.map((p) => (
              <td key={p} colSpan={2} className={`p-0 border-b border-black ${p === 13 ? 'border-r-2' : 'border-r'}`}>{p}</td>
            ))}
            <td colSpan={8} className="p-0 border-b border-black" />
          </tr>
          {rows.map((n) => <ClassRow key={n} n={n} />)}
        </tbody>
      </table>
    </div>
  );
}

const ARROWS: Record<string, string> = {
  up: 'M2 6.5l3-3 3 3',
  down: 'M2 3.5l3 3 3-3',
  left: 'M6.5 2l-3 3 3 3',
  right: 'M3.5 2l3 3-3 3',
};

function ScrollButton({ dir }: { dir: string }) {
  return (
    <button
      aria-label={`Scroll ${dir}`}
      className="w-[15px] h-[15px] shrink-0 rounded-sm border border-[#e8f0ff] bg-[#c5d5fc] flex items-center justify-center shadow-[inset_-1px_-1px_0_#a8bff0]"
    >
      <svg viewBox="0 0 10 10" className="w-2.5 h-2.5 fill-none stroke-[#4d6185] stroke-2" aria-hidden="true">
        <path d={ARROWS[dir]} />
      </svg>
    </button>
  );
}

function VerticalScroll() {
  return (
    <div className="w-[17px] shrink-0 flex flex-col items-center gap-px bg-[#f3f1ec]">
      <ScrollButton dir="up" />
      <div className="w-[15px] h-[75px] rounded-sm border border-white bg-linear-to-r from-[#cfdcfe] to-[#b9cbf8] shadow-[inset_-1px_-1px_0_#9db6ee] flex items-center justify-center">
        <span className="w-1.5 h-2 bg-[repeating-linear-gradient(#eef4fe_0_1px,#8cb0f8_1px_2px)]" />
      </div>
      <div className="flex-1" />
      <ScrollButton dir="down" />
    </div>
  );
}

// edge is the way the divider to the right of the tab leans
const TABS = [
  { name: 'Defined Names', fill: '#ece9d8', ink: 'text-black', width: 'w-[94px]' },
  { name: 'Note', fill: '#ece9d8', ink: 'text-black', width: 'w-[34px]' },
  { name: 'Home', fill: '#ffff00', ink: 'text-black', width: 'w-[39px]' },
  { name: 'Data', fill: '#ffff00', ink: 'text-black', width: 'w-[33px]' },
  { name: 'Statistik', fill: '#ffff00', ink: 'text-black', width: 'w-14', edge: 'back' },
  { name: 'Hari1', fill: '#ffffff', ink: 'text-black font-bold', width: 'w-[38px]' },
  { name: 'Hari2', fill: '#00ffff', ink: 'text-[#0a4a4a]', width: 'w-[34px]' },
  { name: 'Hari3', fill: '#00ffff', ink: 'text-[#0a4a4a]', width: 'w-9' },
  { name: 'Hari4', fill: '#00ffff', ink: 'text-[#0a4a4a]', width: 'w-9' },
  { name: 'Hari5', fill: '#00ffff', ink: 'text-[#0a4a4a]', width: 'w-[37px]' },
  { name: 'Guru', fill: '#ff0000', ink: 'text-white', width: 'w-[35px]' },
  { name: '2Guru', fill: '#0000ff', ink: 'text-white', width: 'w-10' },
  { name: 'Tahun', fill: '#0000ff', ink: 'text-white', width: 'w-[41px]' },
  { name: 'Jadual Guru', fill: '#339966', ink: 'text-white', width: 'w-[76px]' },
  { name: 'Jadual Kelas', fill: '#ff6600', ink: 'text-white', width: 'w-[78px]' },
  { name: 'RELIEF', fill: '#ff0000', ink: 'text-white', width: 'w-[47px]' },
  { name: 'Data Relief', fill: '#ff0000', ink: 'text-white', width: 'w-[69px]' },
];

function TabEdge({ left, right, back }: { left: string; right: string; back?: boolean }) {
  return (
    <svg viewBox="0 0 8 15" className="w-2 h-[15px] shrink-0" aria-hidden="true">
      <rect width="8" height="15" fill={right} />
      <path d={back ? 'M0 0l8 15H0z' : 'M0 0h8L0 15z'} fill={left} />
      <path d={back ? 'M.5 0l7 15' : 'M7.5 0l-7 15'} stroke="#000" strokeWidth="1.2" />
    </svg>
  );
}

const NAV = [
  { label: 'First sheet', d: 'M1.5 1v7M8 1v7L3.5 4.5z' },
  { label: 'Previous sheet', d: 'M6 1.5v6l-3-3z' },
  { label: 'Next sheet', d: 'M3 1.5v6l3-3z' },
  { label: 'Last sheet', d: 'M1 1v7l4.5-3.5zM7.5 1v7' },
];

function TabStrip() {
  return (
    <div className="h-[18px] shrink-0 flex bg-[#ece9d8] border-b-2 border-[#f7f6f0]">
      <div className="w-[66px] shrink-0 flex">
        {NAV.map(({ label, d }) => (
          <button key={label} aria-label={label} className="flex-1 flex items-center justify-center">
            <svg viewBox="0 0 9 9" className="w-[9px] h-[9px] stroke-black" aria-hidden="true"><path d={d} /></svg>
          </button>
        ))}
      </div>
      <div className="flex flex-1 min-w-0 border-t border-[#8d8a7c]">
        <TabEdge left="#ece9d8" right="#ece9d8" back />
        {TABS.map((tab, i) => (
          <div key={tab.name} className="flex shrink-0 h-[15px]">
            <button
              className={`${tab.width} ${tab.ink} h-[15px] text-[12px] leading-[15px] whitespace-nowrap flex justify-center ${tab.name === 'Hari1' ? 'border-b border-[#00e0e0]' : ''}`}
              style={{ backgroundColor: tab.fill }}
            >
              {tab.name}
            </button>
            <TabEdge left={tab.fill} right={TABS[i + 1]?.fill ?? '#ece9d8'} back={tab.edge === 'back'} />
          </div>
        ))}
      </div>
      <div className="w-1 shrink-0 border-l border-white border-r-2 border-r-black" />
      <div className="w-[142px] shrink-0 flex items-center gap-[2px] bg-[#f3f1ec]">
        <ScrollButton dir="left" />
        <div className="w-[105px] h-[15px] rounded-sm border border-white bg-linear-to-b from-[#cfdcfe] to-[#b9cbf8] shadow-[inset_-1px_-1px_0_#9db6ee] flex items-center justify-center">
          <span className="w-2 h-1.5 bg-[repeating-linear-gradient(90deg,#eef4fe_0_1px,#8cb0f8_1px_2px)]" />
        </div>
        <div className="flex-1" />
        <ScrollButton dir="right" />
      </div>
      <div className="w-[17px] shrink-0" />
    </div>
  );
}

function DrawDock() {
  return (
    <div className="h-7 shrink-0 flex items-center pl-[10px] gap-[3px] bg-linear-to-r from-[#9ebef5] to-[#c4dafa]">
      <Toolbar label="Drawing">
        <Hot before="D" hot="r" after="aw" className="w-[30px] pl-[3px]" />
        <DropArrow />
        <Tool name="pointer" />
        <Sep />
        <Hot before="A" hot="u" after="toShapes" className="w-[62px] pl-[2px]" />
        <DropArrow />
        <Tool name="line" /><Tool name="arrow" /><Tool name="rectangle" /><Tool name="oval" /><Tool name="textBox" />
        <Tool name="verticalText" /><Tool name="wordArt" /><Tool name="diagram" /><Tool name="clipArt" /><Tool name="picture" />
        <Sep />
        <Tool name="fill" /><DropArrow /><Tool name="lineColor" /><DropArrow /><Tool name="fontColor" /><DropArrow />
        <Tool name="lineStyle" /><Tool name="dashStyle" /><Tool name="arrowStyle" /><Tool name="shadow" /><Tool name="threeD" />
      </Toolbar>
      <Toolbar label="Visual Basic">
        <Tool name="play" /><Tool name="record" />
        <button className="w-[59px] shrink-0 pl-1 text-left">Security...</button>
        <Sep />
        <Tool name="visualBasic" /><Tool name="tools" active /><Tool name="ruler" />
        <Sep />
        <Tool name="infinity" />
      </Toolbar>
      <Toolbar label="Control Toolbox">
        <Tool name="ruler" /><Tool name="properties" /><Tool name="viewCode" />
        <Sep />
        <Tool name="checkBox" /><Tool name="editBox" /><Tool name="command" /><Tool name="option" /><Tool name="listBox" />
        <Tool name="comboBox" /><Tool name="toggle" /><Tool name="spin" /><Tool name="scroll" /><Tool name="label" /><Tool name="picture" />
        <Sep />
        <Tool name="moreControls" />
      </Toolbar>
    </div>
  );
}

const PANELS = ['w-[34px]', 'w-28', 'w-[25px]', 'w-[30px]', 'w-[26px]', 'w-7', 'w-[25px]', 'w-5'];

function StatusBar() {
  return (
    <footer className="h-[18px] shrink-0 flex items-stretch gap-px pl-1 pr-[3px] bg-[#ece9d8] border-b-2 border-[#2f74d8]">
      <span className="flex-1 leading-5 text-[11px]">Ready</span>
      {PANELS.map((width, i) => (
        <div key={i} className={`${width} mt-[2px] border border-b-0 border-[#d0cbb8]`} />
      ))}
    </footer>
  );
}

export default function App() {
  return (
    <div className="h-screen flex flex-col overflow-hidden text-[11px] leading-[14px] text-black bg-white font-['DejaVu_Sans_Condensed','DejaVu_Sans',Tahoma,sans-serif]">
      <TitleBar />
      <div className="shrink-0 flex flex-col bg-linear-to-r from-[#9ebef5] to-[#c4dafa] to-50%">
        <MenuBar />
        <div className="flex flex-col gap-px pl-[2px]">
          <StandardBar />
          <FormatBar />
        </div>
        <FormulaBar />
      </div>
      <main className="flex-1 min-h-0 flex border-t-2 border-l-2 border-[#7d7a6e]">
        <Sheet />
        <VerticalScroll />
      </main>
      <TabStrip />
      <DrawDock />
      <StatusBar />
    </div>
  );
}
